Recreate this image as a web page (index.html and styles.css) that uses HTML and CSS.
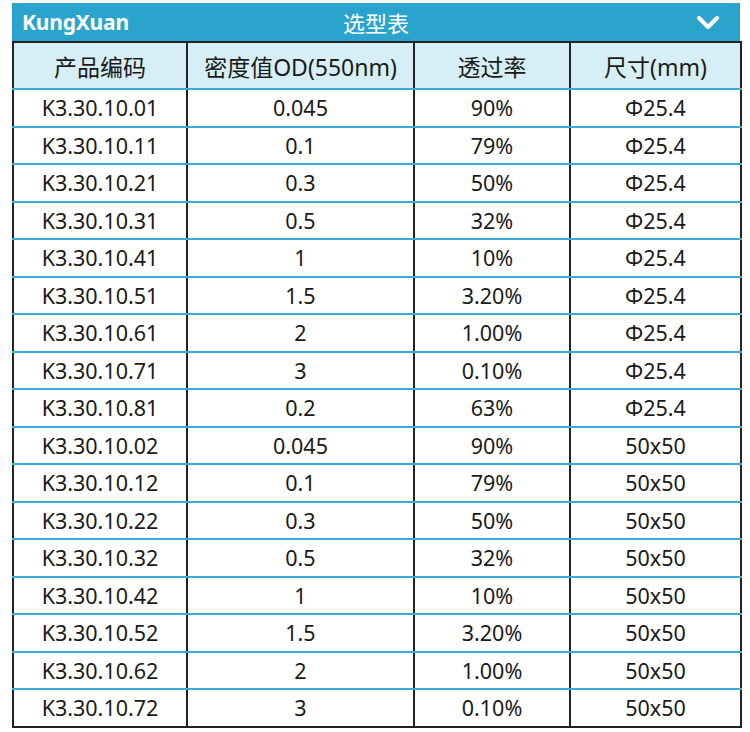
FILE: index.html
```html
<!DOCTYPE html>
<html lang="zh">
<head>
<meta charset="utf-8">
<title>选型表</title>
<link rel="stylesheet" href="styles.css">
</head>
<body>
<div class="wrap">
  <div class="bar">
    <span class="brand">KungXuan</span>
    <span class="title">选型表</span>
    <svg class="chev" width="24" height="16" viewBox="0 0 24 16" aria-hidden="true">
      <polyline points="3,3 12,12 21,3" fill="none" stroke="#fff" stroke-width="4.2" stroke-linecap="round" stroke-linejoin="round"/>
    </svg>
  </div>
  <table class="grid">
    <colgroup>
      <col class="c1"><col class="c2"><col class="c3"><col class="c4">
    </colgroup>
    <thead>
      <tr><th>产品编码</th><th>密度值OD(550nm)</th><th>透过率</th><th>尺寸(mm)</th></tr>
    </thead>
    <tbody>
      <tr><td>K3.30.10.01</td><td>0.045</td><td>90%</td><td>Φ25.4</td></tr>
      <tr><td>K3.30.10.11</td><td>0.1</td><td>79%</td><td>Φ25.4</td></tr>
      <tr><td>K3.30.10.21</td><td>0.3</td><td>50%</td><td>Φ25.4</td></tr>
      <tr><td>K3.30.10.31</td><td>0.5</td><td>32%</td><td>Φ25.4</td></tr>
      <tr><td>K3.30.10.41</td><td>1</td><td>10%</td><td>Φ25.4</td></tr>
      <tr><td>K3.30.10.51</td><td>1.5</td><td>3.20%</td><td>Φ25.4</td></tr>
      <tr><td>K3.30.10.61</td><td>2</td><td>1.00%</td><td>Φ25.4</td></tr>
      <tr><td>K3.30.10.71</td><td>3</td><td>0.10%</td><td>Φ25.4</td></tr>
      <tr><td>K3.30.10.81</td><td>0.2</td><td>63%</td><td>Φ25.4</td></tr>
      <tr><td>K3.30.10.02</td><td>0.045</td><td>90%</td><td>50x50</td></tr>
      <tr><td>K3.30.10.12</td><td>0.1</td><td>79%</td><td>50x50</td></tr>
      <tr><td>K3.30.10.22</td><td>0.3</td><td>50%</td><td>50x50</td></tr>
      <tr><td>K3.30.10.32</td><td>0.5</td><td>32%</td><td>50x50</td></tr>
      <tr><td>K3.30.10.42</td><td>1</td><td>10%</td><td>50x50</td></tr>
      <tr><td>K3.30.10.52</td><td>1.5</td><td>3.20%</td><td>50x50</td></tr>
      <tr><td>K3.30.10.62</td><td>2</td><td>1.00%</td><td>50x50</td></tr>
      <tr><td>K3.30.10.72</td><td>3</td><td>0.10%</td><td>50x50</td></tr>
    </tbody>
  </table>
</div>
</body>
</html>
```
FILE: styles.css
```css
html, body {
  margin: 0;
  padding: 0;
  background: #ffffff;
}
body {
  font-family: "Noto Sans", "Noto Sans CJK SC", sans-serif;
  color: #1a1a1a;
}
.wrap {
  width: 728px;
  padding: 3px 10px 0 12px;
}
.bar {
  position: relative;
  height: 38px;
  background: #2ba4cd;
  display: flex;
  align-items: center;
  padding-left: 10px;
}
.brand {
  color: #ffffff;
  font-weight: 700;
  font-size: 21px;
  letter-spacing: -0.2px;
}
.title {
  position: absolute;
  left: 0;
  right: 0;
  text-align: center;
  color: #ffffff;
  font-size: 22px;
  line-height: 38px;
  font-family: "Noto Sans CJK SC", sans-serif;
}
.chev {
  position: absolute;
  right: 20px;
  top: 12px;
}
.grid {
  width: 728px;
  border-collapse: collapse;
  table-layout: fixed;
  margin-top: 0;
}
.c1 { width: 174px; }
.c2 { width: 227px; }
.c3 { width: 156px; }
.c4 { width: 171px; }
.grid th, .grid td {
  border-left: 2px solid #222222;
  border-right: 2px solid #222222;
  border-bottom: 2px solid #3aabd4;
  text-align: center;
  padding: 0;
  white-space: nowrap;
}
.grid th {
  border-top: 2px solid #222222;
  background: #d6eef6;
  font-weight: 400;
  font-size: 23px;
  height: 45px;
}
.grid td {
  font-size: 21.5px;
  height: 35.5px;
}
.grid tbody tr:last-child td {
  border-bottom: 2px solid #222222;
}
```
